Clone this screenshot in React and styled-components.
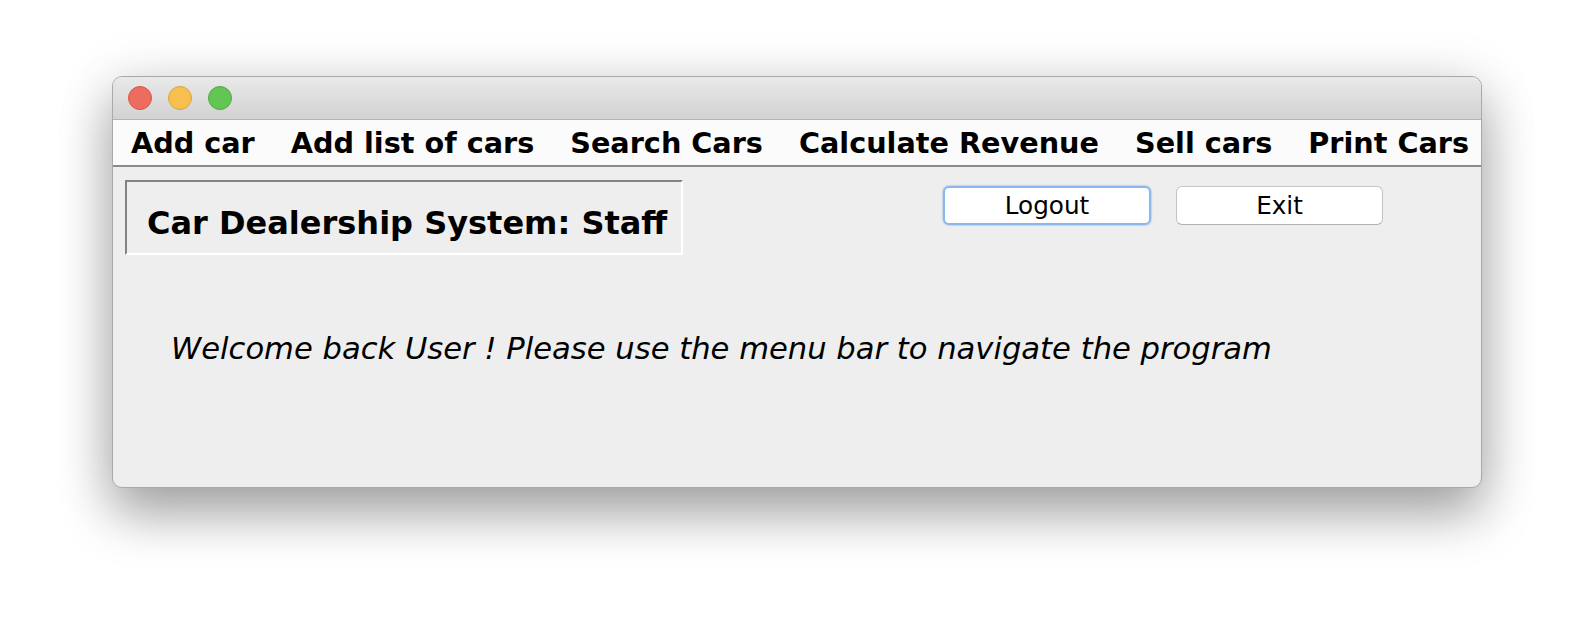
import React from "react";
import styled, { createGlobalStyle } from "styled-components";

const Global = createGlobalStyle`
  html, body { margin: 0; padding: 0; background: #ffffff; }
  body { font-family: "DejaVu Sans", "Liberation Sans", sans-serif; }
`;

const Page = styled.div`
  width: 1594px;
  height: 636px;
  box-sizing: border-box;
  padding: 76px 0 0 112px;
  background: #ffffff;
  overflow: hidden;
`;

const Window = styled.div`
  width: 1370px;
  height: 412px;
  box-sizing: border-box;
  border: 1px solid #a9a9a9;
  border-radius: 10px;
  overflow: hidden;
  display: flex;
  flex-direction: column;
  background: #eeeeee;
  box-shadow: 0 26px 52px rgba(0, 0, 0, 0.32), 0 6px 60px rgba(0, 0, 0, 0.12);
`;

const TitleBar = styled.div`
  height: 42px;
  flex: none;
  display: flex;
  align-items: center;
  gap: 16px;
  padding-left: 15px;
  background: linear-gradient(#e9e9e9, #d2d2d2);
  border-bottom: 1px solid #b3b3b3;
`;

const Light = styled.span`
  width: 22px;
  height: 22px;
  border-radius: 50%;
  background: ${(p) => p.$fill};
  border: 1px solid ${(p) => p.$edge};
`;

const MenuBar = styled.nav`
  height: 45px;
  flex: none;
  display: flex;
  align-items: center;
  background: #fbfbfb;
  border-bottom: 2px solid #8a8a8a;
`;

const MenuItem = styled.span`
  padding: 0 ${(p) => p.$pad}px;
  font-family: "DejaVu Sans", sans-serif;
  font-weight: bold;
  font-size: 28.7px;
  color: #000;
  white-space: nowrap;
`;

const Content = styled.main`
  flex: 1;
  display: flex;
  flex-direction: column;
  padding: 13px 0 0 12px;
`;

const HeaderRow = styled.div`
  display: flex;
  align-items: flex-start;
`;

const TitleBox = styled.div`
  width: 558px;
  height: 75px;
  box-sizing: border-box;
  border-style: solid;
  border-width: 2px;
  border-color: #828282 #ffffff #ffffff #828282;
  padding: 23px 0 0 20px;
  font-family: "DejaVu Sans", sans-serif;
  font-weight: bold;
  font-size: 32px;
  line-height: 37px;
  color: #000;
  white-space: nowrap;
`;

const ButtonGroup = styled.div`
  display: flex;
  gap: 25px;
  margin-left: 260px;
  margin-top: 6px;
`;

const Button = styled.button`
  width: ${(p) => (p.$focused ? "208px" : "207px")};
  height: 39px;
  box-sizing: border-box;
  background: #ffffff;
  border-radius: 6px;
  border: ${(p) => (p.$focused ? "2px solid #8ab7ec" : "1px solid #c4c4c4")};
  border-bottom-color: ${(p) => (p.$focused ? "#8ab7ec" : "#b0b0b0")};
  box-shadow: ${(p) => (p.$focused ? "0 0 1px 1px rgba(120,170,230,0.35)" : "none")};
  font-family: "DejaVu Sans", sans-serif;
  font-size: 24.7px;
  color: #000;
  padding: 0;
  display: flex;
  align-items: center;
  justify-content: center;
`;

const Welcome = styled.p`
  margin: 76px 0 0 46px;
  font-family: "DejaVu Sans", sans-serif;
  font-style: italic;
  font-size: 30.6px;
  line-height: 36px;
  color: #000;
  white-space: nowrap;
`;

const menu = [
  "Add car",
  "Add list of cars",
  "Search Cars",
  "Calculate Revenue",
  "Sell cars",
  "Print Cars",
];

export default function App() {
  return (
    <>
      <Global />
      <Page>
        <Window>
          <TitleBar>
            <Light $fill="#ee6b60" $edge="#d5574c" />
            <Light $fill="#f6bf4f" $edge="#d9a441" />
            <Light $fill="#62c655" $edge="#53a93f" />
          </TitleBar>
          <MenuBar>
            {menu.map((m) => (
              <MenuItem key={m} $pad={18}>
                {m}
              </MenuItem>
            ))}
          </MenuBar>
          <Content>
            <HeaderRow>
              <TitleBox>Car Dealership System: Staff</TitleBox>
              <ButtonGroup>
                <Button $focused>Logout</Button>
                <Button>Exit</Button>
              </ButtonGroup>
            </HeaderRow>
            <Welcome>
              Welcome back User ! Please use the menu bar to navigate the program
            </Welcome>
          </Content>
        </Window>
      </Page>
    </>
  );
}
